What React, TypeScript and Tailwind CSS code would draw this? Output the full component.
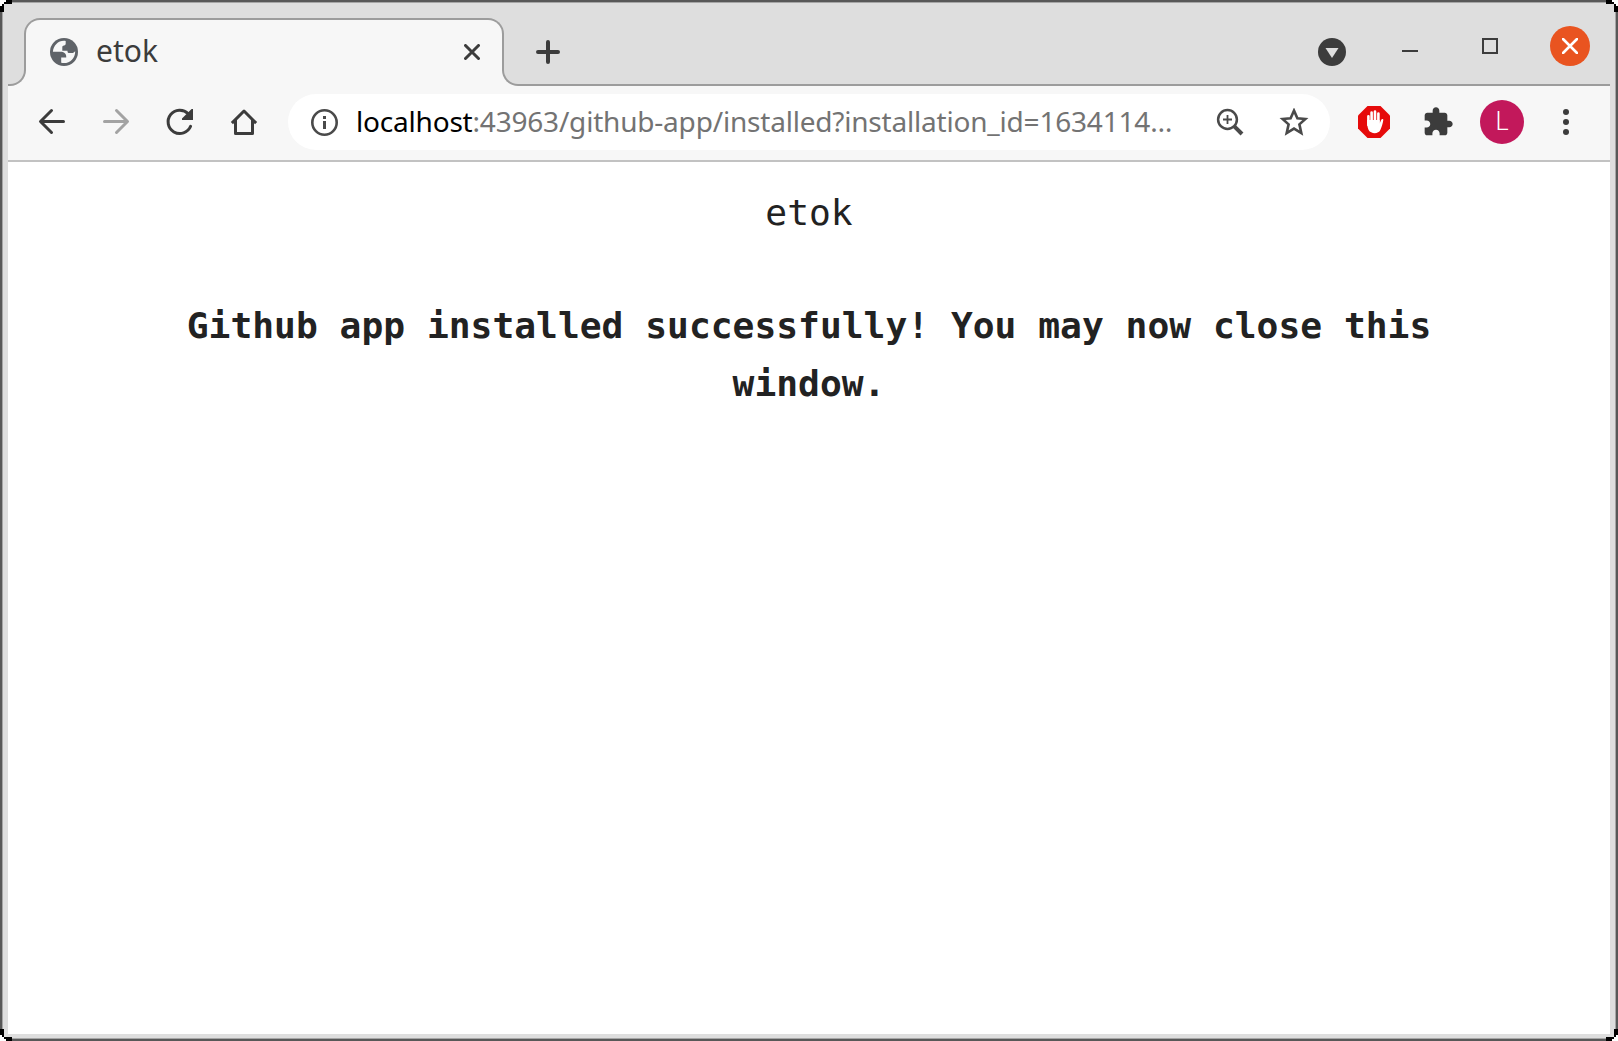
import React from "react";

const INK = "#3c3c3c";

function GlobeIcon() {
  return (
    <svg className="block size-7 shrink-0" viewBox="0 0 28 28">
      <circle cx="14" cy="14" r="14" fill="#5f6368" />
      <path d="M15.700 2.900C9 1.800 3.400 7 2.900 13.700H10.500C14 13.700 16.200 15.500 16.200 18.200V19.600H11.200V24.800C18.800 26.500 25.300 21 25.200 13.200L23 15H19.500C17.800 15 17.500 14.600 17.500 12.700H12.300V9.200C12.300 8.200 13 7.700 14 7.500C15.300 7.200 15.700 6.600 15.700 5.500Z" fill="#f7f7f7" />
    </svg>
  );
}

function Arrow({ color, flip }: { color: string; flip?: boolean }) {
  return (
    <svg className={flip ? "block size-8 shrink-0 -scale-x-100" : "block size-8 shrink-0"} viewBox="0 0 32 32" fill="none" stroke={color} strokeWidth="3" strokeLinecap="round" strokeLinejoin="round">
      <path d="M27.500 15.500H5M15.500 4.500L4.500 15.500L15.500 26.500" />
    </svg>
  );
}

function ReloadIcon() {
  return (
    <svg className="block size-8 shrink-0" viewBox="0 0 32 32">
      <path d="M26.600 20.300A11.700 11.700 0 1 1 24.200 7.700" fill="none" stroke={INK} strokeWidth="3" strokeLinecap="round" />
      <path d="M29 3V14H18V12.600L27.600 3Z" fill={INK} />
    </svg>
  );
}

function HomeIcon() {
  return (
    <svg className="block size-8 shrink-0" viewBox="0 0 32 32" fill="none" stroke={INK} strokeWidth="3" strokeLinejoin="round">
      <path d="M3.900 17.100L16 5L28.100 17.100" />
      <path d="M7.500 14V27.500H24.500V14" />
    </svg>
  );
}

function InfoIcon() {
  return (
    <svg className="block size-[27px] shrink-0" viewBox="0 0 27 27">
      <circle cx="13.500" cy="13.500" r="12.200" fill="none" stroke="#4a4a4a" strokeWidth="2.600" />
      <path d="M12 7h3v3h-3zM12 12h3v8h-3z" fill="#4a4a4a" />
    </svg>
  );
}

function ZoomIcon() {
  return (
    <svg className="block size-[28px] shrink-0" viewBox="0 0 28 28" fill="none" stroke="#4a4a4a">
      <circle cx="11.500" cy="11.500" r="9.400" strokeWidth="2.500" />
      <path d="M7 11.500h9M11.500 7v9" strokeWidth="1.800" />
      <path d="M18.300 18.300L26 26" strokeWidth="4" />
    </svg>
  );
}

function StarIcon() {
  return (
    <svg className="block h-7 w-[30px] shrink-0" viewBox="0 0 30 28" fill="none" stroke="#4a4a4a" strokeWidth="2.600">
      <path d="M15 2.600L18.400 10.200L26.400 11L20.400 16.400L22.300 25L15 20.600L7.700 25L9.600 16.400L3.600 11L11.600 10.200Z" />
    </svg>
  );
}

function BlockIcon() {
  return (
    <svg className="block size-8 shrink-0" viewBox="0 0 32 32">
      <path d="M9.500 0H22.500L32 9.500V22.500L22.500 32H9.500L0 22.500V9.500Z" fill="#e60b0b" />
      <path d="M10.400 10.300V19M13.600 6.600V16M17 5.500V16M20.400 7.500V17" stroke="#fff" strokeWidth="2.600" strokeLinecap="round" />
      <path d="M9.100 14H21.700V17.500L23 14.300C23.600 12.800 25.500 12.700 25.300 13.900C24.800 17 23.800 20.500 22.300 24C20.600 28.200 13 28.200 10.600 24C9.300 21.500 9.100 17 9.100 14Z" fill="#fff" />
    </svg>
  );
}

function PuzzleIcon() {
  return (
    <svg className="block size-8 shrink-0" viewBox="0 0 24 24" fill={INK}>
      <path d="M20.500 11H19V7c0-1.100-.9-2-2-2h-4V3.500C13 2.120 11.880 1 10.500 1S8 2.120 8 3.500V5H4c-1.100 0-1.990.9-1.990 2v3.800H3.500c1.490 0 2.700 1.210 2.700 2.700s-1.210 2.700-2.700 2.700H2V20c0 1.100.9 2 2 2h3.800v-1.500c0-1.490 1.210-2.700 2.700-2.700 1.490 0 2.700 1.210 2.700 2.700V22H17c1.100 0 2-.9 2-2v-4h1.500c1.380 0 2.500-1.120 2.500-2.500S21.880 11 20.500 11z" />
    </svg>
  );
}

function Corner({ className }: { className: string }) {
  return (
    <svg className={"absolute size-3 " + className} viewBox="0 0 12 12" shapeRendering="crispEdges">
      <path d="M0 0H6V2H4V4H2V6H0Z" fill="#fff" />
      <path d="M6 0H12V4H6V4H4V6H4V12H0V6H2V4H4V2H6Z" fill="#000" />
    </svg>
  );
}

function TabStrip() {
  return (
    <div className="flex h-[83px] shrink-0 bg-[#f7f7f7]">
      <div className="flex w-[18px] shrink-0 flex-col">
        <div className="h-8 w-full bg-[#dedede]" />
        <div className="w-full flex-1 rounded-br-[16px] border-r-2 border-b-2 border-[#9c9c9c] bg-[#dedede]" />
      </div>
      <div className="-mx-0.5 flex w-[480px] shrink-0 flex-col">
        <div className="-mx-px h-[15px] bg-[#dedede]" />
        <div className="relative flex-1">
          <div className="absolute inset-x-0 top-0 h-[17px] bg-[#dedede]">
            <div className="h-full rounded-t-[16px] border-x-2 border-t-2 border-[#9c9c9c] bg-[#f7f7f7]" />
          </div>
          <div className="relative flex h-[68px] items-center pl-[26px] pr-6">
            <GlobeIcon />
            <span className="ml-[18px] -mt-0.5 text-[30px] leading-8 text-[#3c3c3c]">etok</span>
            <svg className="ml-auto block size-4" viewBox="0 0 16 16" stroke={INK} strokeWidth="3" strokeLinecap="round">
              <path d="M1.500 1.500L14.500 14.500M14.500 1.500L1.500 14.500" />
            </svg>
          </div>
        </div>
      </div>
      <div className="flex min-w-0 flex-1 flex-col">
        <div className="h-8 w-full bg-[#dedede]" />
        <div className="relative flex-1 rounded-bl-[16px] border-b-2 border-l-2 border-[#9c9c9c] bg-[#dedede]">
          <div className="absolute inset-x-0 -top-8 flex h-[83px]">
            <svg className="mt-[37px] ml-8 block size-6" viewBox="0 0 24 24" stroke={INK} strokeWidth="4" strokeLinecap="round">
              <path d="M2 12H22M12 2V22" />
            </svg>
            <svg className="mt-[35px] ml-auto block size-7" viewBox="0 0 28 28">
              <circle cx="14" cy="14" r="14" fill={INK} />
              <path d="M7.500 10H20.500L14 20Z" fill="#dedede" />
            </svg>
            <div className="mt-[47px] ml-14 h-0.5 w-4 bg-[#3c3c3c]" />
            <div className="mt-[35px] ml-16 size-4 border-2 border-[#3c3c3c]" />
            <div className="mt-[23px] mr-5 ml-[52px] flex size-10 items-center justify-center rounded-full bg-[#e95420]">
              <svg className="block size-4" viewBox="0 0 16 16" stroke="#fff" strokeWidth="2.600" strokeLinecap="round">
                <path d="M1 1L15 15M15 1L1 15" />
              </svg>
            </div>
          </div>
        </div>
      </div>
    </div>
  );
}

function Toolbar() {
  return (
    <div className="flex h-[76px] shrink-0 items-center border-b-2 border-[#c2c2c2] bg-[#f7f7f7] pb-0.5 pl-7">
      <div className="flex gap-8">
        <Arrow color={INK} />
        <Arrow color="#a3a3a3" flip />
        <ReloadIcon />
        <HomeIcon />
      </div>
      <div className="ml-7 flex h-14 w-[1042px] shrink-0 items-center rounded-full bg-white pl-[23px]">
        <InfoIcon />
        <div className="-mt-0.5 ml-[18px] w-[829px] text-[28px] leading-8 tracking-[-0.200px] whitespace-nowrap text-[#737373]">
          <span className="text-black">localhost</span>:43963/github-app/installed?installation_id=1634114…
        </div>
        <div className="ml-[31px]"><ZoomIcon /></div>
        <div className="ml-[35px]"><StarIcon /></div>
      </div>
      <div className="ml-7"><BlockIcon /></div>
      <div className="ml-8"><PuzzleIcon /></div>
      <div className="ml-[26px] flex size-11 shrink-0 items-center justify-center rounded-full bg-[#c2185b] font-['Roboto'] text-[25px] font-light text-white">L</div>
      <svg className="ml-[39px] block h-[26px] w-1.5 shrink-0" viewBox="0 0 6 26" fill={INK}>
        <circle cx="3" cy="3" r="3" />
        <circle cx="3" cy="13" r="3" />
        <circle cx="3" cy="23" r="3" />
      </svg>
    </div>
  );
}

export default function App() {
  return (
    <div className="relative h-[1041px] w-[1618px] overflow-hidden font-['Noto_Sans',sans-serif]">
      <div className="flex h-full flex-col border-2 border-[#585858] bg-[#dedede]">
        <div className="flex min-h-0 flex-1 flex-col border border-[#a6a6a6] px-[5px] pb-1">
          <TabStrip />
          <Toolbar />
          <main className="flex-1 bg-white pt-[22px] text-center font-['DejaVu_Sans_Mono',monospace] text-[36.270px] leading-[58px] text-[#222]">
            <p>etok</p>
            <p className="mx-auto mt-[55px] w-[1300px] font-bold">Github app installed successfully! You may now close this window.</p>
          </main>
        </div>
      </div>
      <Corner className="top-0 left-0" />
      <Corner className="top-0 right-0 -scale-x-100" />
      <Corner className="bottom-0 left-0 -scale-y-100" />
      <Corner className="right-0 bottom-0 rotate-180" />
    </div>
  );
}
